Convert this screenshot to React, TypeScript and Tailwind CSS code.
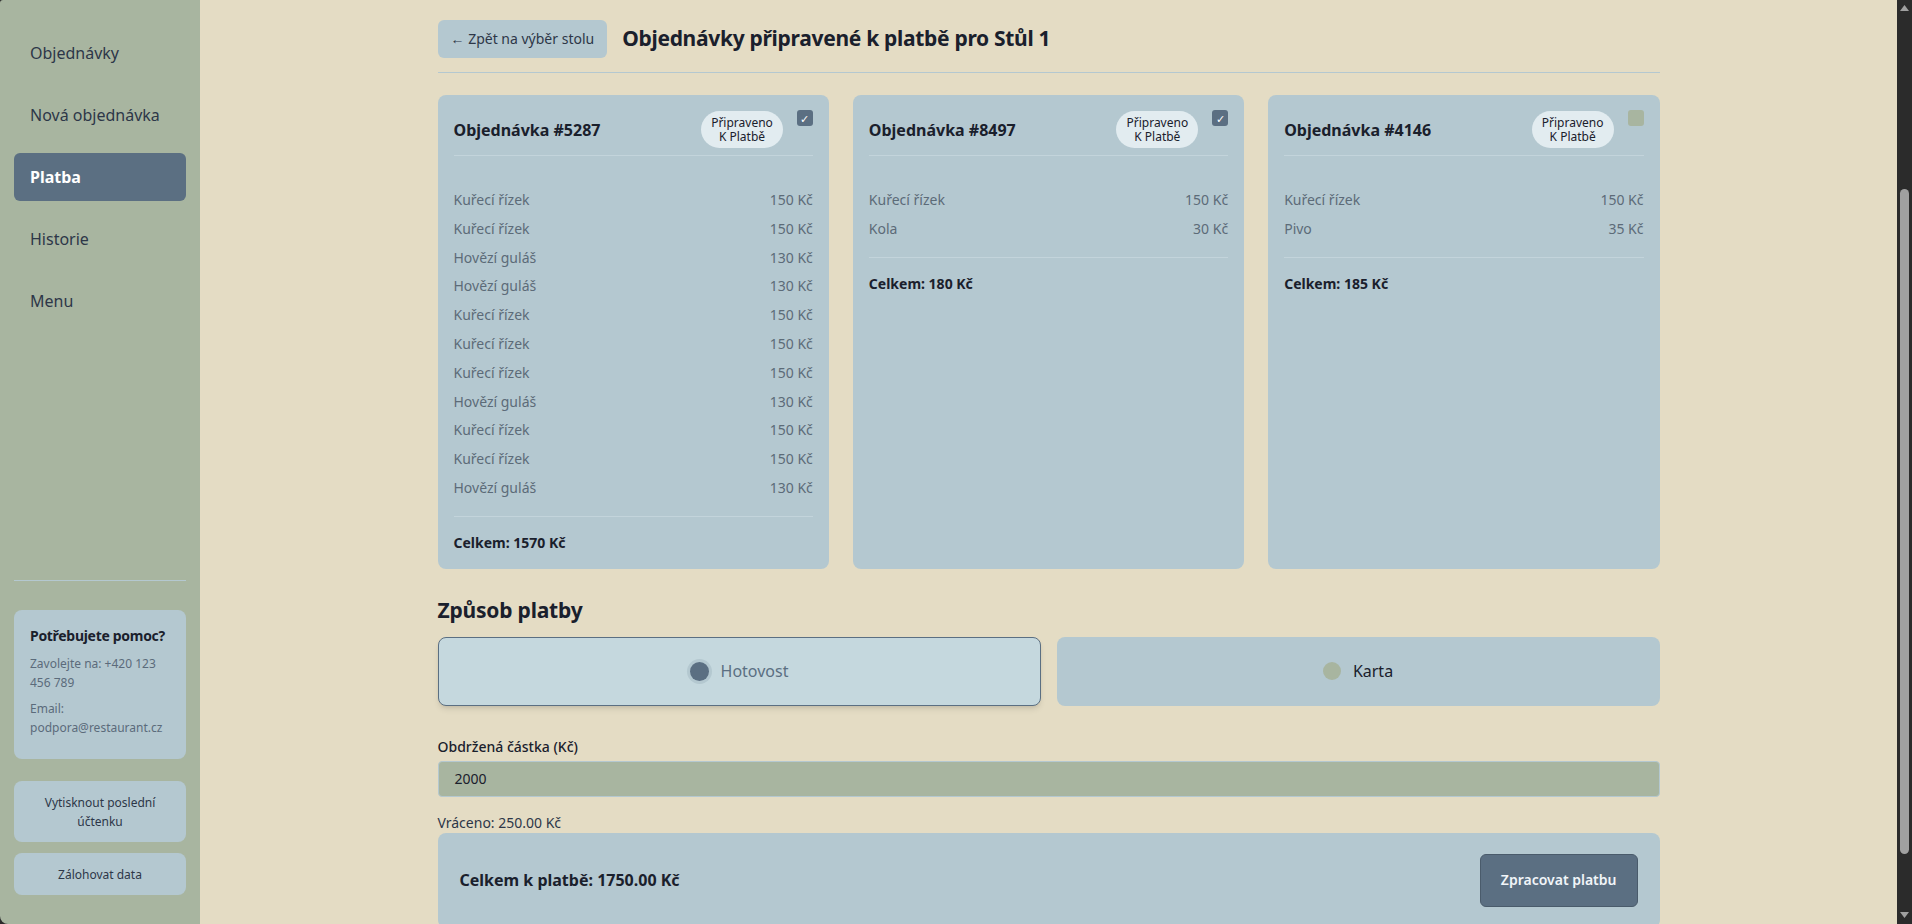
import React from "react";

type Order = {
    id: string;
    checked: boolean;
    items: { name: string; price: number }[];
};

const orders: Order[] = [
    {
        id: "5287",
        checked: true,
        items: [
            { name: "Kuřecí řízek", price: 150 },
            { name: "Kuřecí řízek", price: 150 },
            { name: "Hovězí guláš", price: 130 },
            { name: "Hovězí guláš", price: 130 },
            { name: "Kuřecí řízek", price: 150 },
            { name: "Kuřecí řízek", price: 150 },
            { name: "Kuřecí řízek", price: 150 },
            { name: "Hovězí guláš", price: 130 },
            { name: "Kuřecí řízek", price: 150 },
            { name: "Kuřecí řízek", price: 150 },
            { name: "Hovězí guláš", price: 130 },
        ],
    },
    {
        id: "8497",
        checked: true,
        items: [
            { name: "Kuřecí řízek", price: 150 },
            { name: "Kola", price: 30 },
        ],
    },
    {
        id: "4146",
        checked: false,
        items: [
            { name: "Kuřecí řízek", price: 150 },
            { name: "Pivo", price: 35 },
        ],
    },
];

const navItems = ["Objednávky", "Nová objednávka", "Platba", "Historie", "Menu"];

function Sidebar() {
    return (
        <aside className="w-[200px] shrink-0 bg-[#a8b5a0] flex flex-col px-[14px] pt-[29px] pb-[29px]">
            <nav className="flex flex-col gap-[14px]">
                {navItems.map((item) => (
                    <div
                        key={item}
                        className={
                            item === "Platba"
                                ? "h-12 px-4 flex items-center rounded-md bg-[#5b6f82] text-white font-bold text-base"
                                : "h-12 px-4 flex items-center rounded-md text-[#2d3748] text-base"
                        }
                    >
                        {item}
                    </div>
                ))}
            </nav>

            <div className="mt-auto border-t border-[#b4c8d0] pt-[29px]">
                {/* Help box */}
                <div className="rounded-lg bg-[#b4c8d0] px-4 pt-[15px] pb-[22px]">
                    <p className="text-sm leading-[21px] font-bold text-[#1a202c] whitespace-nowrap tracking-[-0.3px]">
                        Potřebujete pomoc?
                    </p>
                    <p className="mt-2 text-xs leading-[19px] text-[#5b6b7b] whitespace-nowrap">
                        Zavolejte na: +420 123
                        <br />
                        456 789
                    </p>
                    <p className="mt-[7px] text-xs leading-[19px] text-[#5b6b7b] whitespace-nowrap">
                        Email:
                        <br />
                        podpora@restaurant.cz
                    </p>
                </div>

                <button className="mt-[22px] w-full rounded-lg bg-[#b4c8d0] py-[11.5px] text-xs leading-[19px] text-[#2d3748] text-center">
                    Vytisknout poslední
                    <br />
                    účtenku
                </button>
                <button className="mt-[11px] w-full rounded-lg bg-[#b4c8d0] py-[11.5px] text-xs leading-[19px] text-[#2d3748] text-center">
                    Zálohovat data
                </button>
            </div>
        </aside>
    );
}

function OrderCard({ order }: { order: Order }) {
    const total = order.items.reduce((s, i) => s + i.price, 0);
    return (
        <div className="rounded-lg bg-[#b4c8d0] p-4 flex flex-col">
            <div className="flex items-center pb-[7px] border-b border-[#c3d4db]">
                <h3 className="flex-1 text-base font-bold text-[#1a202c]">Objednávka #{order.id}</h3>
                <span className="rounded-full bg-[#e2ecf0] px-[10px] py-[4.5px] text-xs leading-[14px] text-center text-[#1a202c]">
                    Připraveno
                    <br />
                    K Platbě
                </span>
                <span
                    className={
                        order.checked
                            ? "ml-[14px] self-start -mt-px w-4 h-4 rounded-[3px] bg-[#5b6f82] flex items-center justify-center text-white text-[11px] leading-none"
                            : "ml-[14px] self-start -mt-px w-4 h-4 rounded-[3px] bg-[#a8b5a0]"
                    }
                >
                    {order.checked ? "✓" : null}
                </span>
            </div>

            <ul className="mt-[30px] mb-[13px]">
                {order.items.map((item, i) => (
                    <li key={i} className="flex justify-between py-1 text-sm leading-[20.8px] text-[#5c6b78]">
                        <span>{item.name}</span>
                        <span>{item.price} Kč</span>
                    </li>
                ))}
            </ul>

            <div className="border-t border-[#c3d4db] pt-[15px] text-sm leading-[21px] font-bold text-[#1a202c]">
                Celkem: {total} Kč
            </div>
        </div>
    );
}

function Scrollbar() {
    return (
        <div className="w-[15px] shrink-0 bg-[#2b2b2b] flex flex-col items-center">
            <svg className="mt-[5px]" width="9" height="6" viewBox="0 0 9 6">
                <path d="M4.5 0 L9 6 L0 6 Z" fill="#a0a0a0" />
            </svg>
            <div className="h-[178px]" />
            <div className="w-[9px] h-[665px] rounded-full bg-[#a0a0a0]" />
            <div className="flex-1" />
            <svg className="mb-[6px]" width="9" height="6" viewBox="0 0 9 6">
                <path d="M0 0 L9 0 L4.5 6 Z" fill="#a0a0a0" />
            </svg>
        </div>
    );
}

export default function App() {
    return (
        <div className="h-screen w-full bg-[#2b2b2b] flex overflow-hidden font-['Noto_Sans',sans-serif]">
            <div className="flex flex-1 rounded-tl-[3px] rounded-bl-[8px] overflow-hidden">
                <Sidebar />

                <main className="flex-1 bg-[#e4dcc4] overflow-hidden">
                    <div className="w-[1222px] mx-auto pt-5">
                        {/* Header */}
                        <div className="flex items-center gap-[15px] pb-[14px] border-b border-[#b4c8d0]">
                            <button className="h-[38px] px-[13px] rounded-md bg-[#b4c8d0] text-sm text-[#2d3748]">
                                ← Zpět na výběr stolu
                            </button>
                            <h1 className="text-[21px] tracking-[-0.3px] font-bold text-[#1a202c]">
                                Objednávky připravené k platbě pro Stůl 1
                            </h1>
                        </div>

                        {/* Orders */}
                        <div className="mt-[22px] grid grid-cols-3 gap-6">
                            {orders.map((o) => (
                                <OrderCard key={o.id} order={o} />
                            ))}
                        </div>

                        {/* Payment method */}
                        <h2 className="mt-[25px] text-[21px] tracking-[-0.2px] leading-[32px] font-bold text-[#1a202c]">
                            Způsob platby
                        </h2>
                        <div className="mt-[11px] grid grid-cols-2 gap-4">
                            <button className="h-[69px] rounded-lg bg-[#c5d8de] border border-[#5b6f82] shadow-md flex items-center justify-center gap-3">
                                <span className="w-[19px] h-[19px] rounded-full bg-[#5b6f82] ring-[3px] ring-[#b4c8d0]" />
                                <span className="text-base text-[#5b6f82]">Hotovost</span>
                            </button>
                            <button className="h-[69px] rounded-lg bg-[#b4c8d0] border border-transparent flex items-center justify-center gap-3">
                                <span className="w-[18px] h-[18px] rounded-full bg-[#a8b5a0]" />
                                <span className="text-base text-[#1a202c]">Karta</span>
                            </button>
                        </div>

                        {/* Cash */}
                        <label className="block mt-[30px] text-sm leading-[21px] font-medium text-[#1a202c]">
                            Obdržená částka (Kč)
                        </label>
                        <div className="mt-1 h-[36px] rounded bg-[#a8b5a0] border border-[#b4c8d0] px-4 flex items-center text-sm text-[#1a202c]">
                            2000
                        </div>
                        <p className="mt-[15px] text-sm leading-[21px] text-[#2d3748]">Vráceno: 250.00 Kč</p>

                        {/* Total */}
                        <div className="rounded-lg bg-[#b4c8d0] px-[22px] py-[21px] flex items-center justify-between">
                            <span className="text-base font-bold text-[#1a202c]">Celkem k platbě: 1750.00 Kč</span>
                            <button className="h-[53px] px-[20px] rounded-md bg-[#5b6f82] border border-[#4a5b6b] text-sm font-semibold text-[#f1f5f9]">
                                Zpracovat platbu
                            </button>
                        </div>
                    </div>
                </main>
            </div>
            <Scrollbar />
        </div>
    );
}
